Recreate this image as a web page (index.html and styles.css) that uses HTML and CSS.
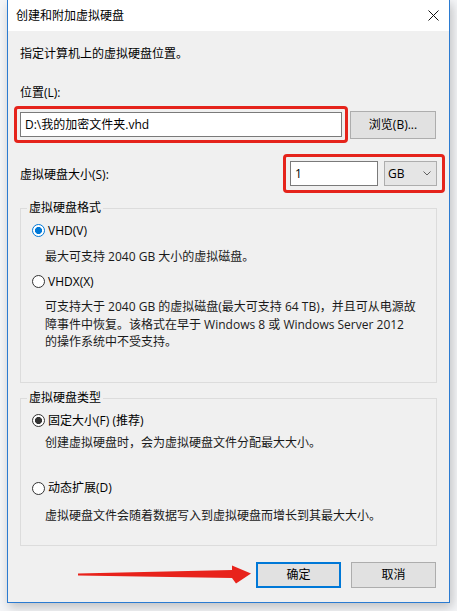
FILE: index.html
```html
<!DOCTYPE html>
<html lang="zh-CN">
<head>
<meta charset="utf-8">
<title>创建和附加虚拟硬盘</title>
<link rel="stylesheet" href="styles.css">
</head>
<body>
<div class="window">
  <div class="titlebar">
    <span class="title">创建和附加虚拟硬盘</span>
    <svg class="close" width="11" height="11" viewBox="0 0 11 11"><path d="M0.5 0.5L10.5 10.5M10.5 0.5L0.5 10.5" stroke="#111" stroke-width="1" fill="none"/></svg>
  </div>
  <div class="content">
    <p class="intro">指定计算机上的虚拟硬盘位置。</p>
    <p class="label-loc">位置(L):</p>
    <div class="loc-row">
      <div class="mark mark-loc"><div class="textbox">D:\我的加密文件夹.vhd</div></div>
      <div class="btn browse">浏览(B)...</div>
    </div>
    <div class="size-row">
      <span class="size-label">虚拟硬盘大小(S):</span>
      <div class="mark mark-size">
        <div class="textbox size-box">1</div>
        <div class="select"><span>GB</span><svg class="chev" width="8" height="5" viewBox="0 0 8 5"><path d="M0.5 0.5L4 4L7.5 0.5" stroke="#606060" stroke-width="1" fill="none"/></svg></div>
      </div>
    </div>
    <fieldset class="group group-format">
      <legend>虚拟硬盘格式</legend>
      <div class="radio-row"><span class="radio checked focus"></span>VHD(V)</div>
      <p class="desc d-vhd">最大可支持 2040 GB 大小的虚拟磁盘。</p>
      <div class="radio-row r-vhdx"><span class="radio"></span>VHDX(X)</div>
      <p class="desc para">可支持大于 2040 GB 的虚拟磁盘(最大可支持 64 TB)，并且可从电源故<br>障事件中恢复。该格式在早于 Windows 8 或 Windows Server 2012<br>的操作系统中不受支持。</p>
    </fieldset>
    <fieldset class="group group-type">
      <legend>虚拟硬盘类型</legend>
      <div class="radio-row"><span class="radio checked"></span>固定大小(F) (推荐)</div>
      <p class="desc d-fixed">创建虚拟硬盘时，会为虚拟硬盘文件分配最大大小。</p>
      <div class="radio-row r-dyn"><span class="radio"></span>动态扩展(D)</div>
      <p class="desc d-dyn">虚拟硬盘文件会随着数据写入到虚拟硬盘而增长到其最大大小。</p>
    </fieldset>
    <div class="buttons">
      <div class="btn ok">确定</div>
      <div class="btn cancel">取消</div>
    </div>
  </div>
</div>
<svg class="arrow" width="180" height="22" viewBox="0 0 180 22"><polygon points="2,8.5 156,5 156,0.5 175,8.5 160,18.5 156,13 2,10.5" fill="#e8221b"/></svg>
</body>
</html>
```
FILE: styles.css
```css
* { box-sizing: border-box; }
html, body { margin: 0; padding: 0; }
body {
  width: 457px;
  height: 611px;
  overflow: hidden;
  position: relative;
  background: #f4f5f7;
  font-family: "Open Sans", "Noto Sans CJK SC", sans-serif;
  font-size: 12px;
  color: #000;
}
p { margin: 0; }
.window {
  margin-left: 7px;
  width: 443px;
  height: 603px;
  border: 1px solid #2b7bd1;
  border-top: none;
  background: #f0f0f0;
  box-shadow: 2px 4px 10px rgba(0, 0, 0, 0.22);
  display: flex;
  flex-direction: column;
}
.titlebar {
  flex: none;
  height: 31px;
  background: #fff;
  display: flex;
  align-items: center;
  justify-content: space-between;
  padding: 0 10px 0 8px;
}
.title { line-height: 18px; }
.close { display: block; }
.content { flex: 1; padding: 0 12px; }
.intro { margin-top: 14px; line-height: 18px; }
.label-loc { margin-top: 21px; line-height: 18px; }
.loc-row {
  margin-top: 4px;
  display: flex;
  align-items: center;
  gap: 2px;
}
.mark { border: 3px solid #e5231b; border-radius: 4px; }
.mark-loc { margin-left: -6px; width: 334px; padding: 3px; }
.textbox {
  background: #fff;
  border: 1px solid #7a7a7a;
  height: 25px;
  line-height: 23px;
  padding-left: 4px;
  white-space: nowrap;
}
.btn {
  background: #e1e1e1;
  border: 1px solid #adadad;
  display: flex;
  align-items: center;
  justify-content: center;
  line-height: 18px;
}
.browse { width: 86px; height: 28px; }
.size-row {
  margin-top: 11px;
  display: flex;
  align-items: center;
  justify-content: space-between;
}
.mark-size {
  margin-right: -8px;
  display: flex;
  gap: 6px;
  padding: 4px 5px 4px 4px;
}
.size-box { width: 88px; }
.select {
  width: 53px;
  height: 25px;
  background: #e5e5e5;
  border: 1px solid #adadad;
  display: flex;
  align-items: center;
  justify-content: space-between;
  padding: 0 5px 0 3px;
}
.chev { display: block; }
.group {
  margin: 6px 0 0 0;
  border: 1px solid #dcdcdc;
  min-width: 0;
}
.group legend {
  padding: 0 2px;
  margin-left: -5px;
  line-height: 18px;
}
.group-format { padding: 4.5px 0 31px 11px; }
.group-type { margin-top: 6.5px; padding: 4.5px 0 20px 11px; }
.radio-row {
  display: flex;
  align-items: center;
  gap: 3px;
  line-height: 18px;
  height: 18px;
}
.radio {
  width: 13px;
  height: 13px;
  border-radius: 50%;
  border: 1px solid #333;
  background: #fff;
  flex: none;
}
.radio.checked { background: radial-gradient(circle, #333 0 3.3px, #fff 3.8px); }
.radio.checked.focus {
  border-color: #0078d7;
  background: radial-gradient(circle, #0078d7 0 3.3px, #fff 3.8px);
}
.desc { padding-left: 13px; line-height: 18px; white-space: nowrap; color: #1a1a1a; }
.d-vhd { margin-top: 8.5px; }
.r-vhdx { margin-top: 6.5px; }
.para { margin-top: 7.75px; line-height: 17.5px; }
.d-fixed { margin-top: 4px; }
.r-dyn { margin-top: 27.5px; }
.d-dyn { margin-top: 9.5px; }
.buttons {
  margin-top: 16px;
  margin-right: 1px;
  display: flex;
  justify-content: flex-end;
  gap: 10px;
}
.buttons .btn { width: 85px; height: 26px; }
.ok { border: 2px solid #0078d7; }
.arrow {
  position: absolute;
  left: 76px;
  top: 565px;
  display: block;
}
```
